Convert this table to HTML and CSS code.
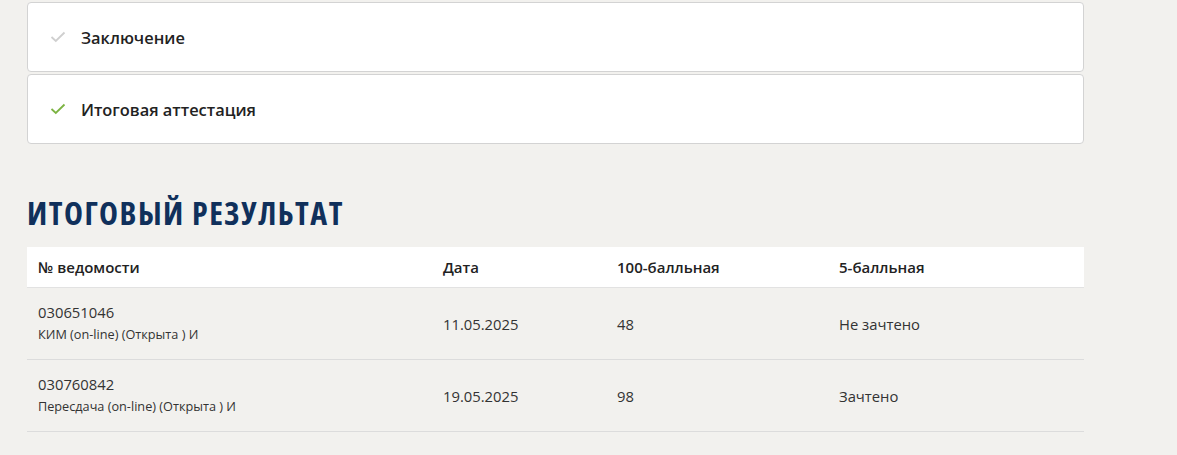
FILE: index.html
```html
<!DOCTYPE html>
<html lang="ru">
<head>
<meta charset="utf-8">
<link rel="stylesheet" href="styles.css">
</head>
<body>
<div class="page">
  <div class="steps">
    <div class="step">
      <svg class="check" width="16" height="12" viewBox="0 0 16 12"><path d="M1.5 6 L5.8 10 L14.5 1.5" fill="none" stroke="#cfcfcf" stroke-width="1.8"/></svg>
      <span class="step-title">Заключение</span>
    </div>
    <div class="step">
      <svg class="check" width="16" height="12" viewBox="0 0 16 12"><path d="M1.5 6 L5.8 10 L14.5 1.5" fill="none" stroke="#7cb342" stroke-width="1.8"/></svg>
      <span class="step-title">Итоговая аттестация</span>
    </div>
  </div>

  <h2 class="section-title">ИТОГОВЫЙ РЕЗУЛЬТАТ</h2>

  <table class="results">
    <thead>
      <tr>
        <th class="c1">№ ведомости</th>
        <th class="c2">Дата</th>
        <th class="c3">100-балльная</th>
        <th class="c4">5-балльная</th>
      </tr>
    </thead>
    <tbody>
      <tr>
        <td><div class="num">030651046</div><div class="sub">КИМ (on-line) (Открыта ) И</div></td>
        <td>11.05.2025</td>
        <td>48</td>
        <td>Не зачтено</td>
      </tr>
      <tr>
        <td><div class="num">030760842</div><div class="sub">Пересдача (on-line) (Открыта ) И</div></td>
        <td>19.05.2025</td>
        <td>98</td>
        <td>Зачтено</td>
      </tr>
    </tbody>
  </table>
</div>
</body>
</html>
```
FILE: styles.css
```css
html, body {
  margin: 0;
  padding: 0;
  background: #f2f1ee;
}
body {
  font-family: "Open Sans", "Noto Sans", sans-serif;
  color: #222;
}
.page {
  width: 1057px;
  margin-left: 27px;
  padding-top: 2px;
}
.steps {
  display: flex;
  flex-direction: column;
  gap: 2px;
}
.step {
  background: #fff;
  border: 1px solid #d3d3d3;
  border-radius: 4px;
  height: 70px;
  display: flex;
  align-items: center;
  padding-left: 22px;
  box-sizing: border-box;
}
.check {
  margin-right: 15px;
  flex: none;
}
.step-title {
  font-size: 16.4px;
  font-weight: 600;
  color: #222;
}
.section-title {
  margin: 50px 0 0 0;
  height: 46px;
  font-family: "Open Sans", sans-serif;
  font-weight: 700;
  font-stretch: 75%;
  font-size: 32px;
  line-height: 37px;
  color: #10305b;
  letter-spacing: 1.5px;
}
.results {
  width: 100%;
  border-collapse: collapse;
  margin-top: 7px;
}
.results th {
  background: #fff;
  text-align: left;
  font-size: 15px;
  font-weight: 600;
  height: 40px;
  padding: 0 11px;
  border-bottom: 1px solid #e2e2e2;
  color: #222;
}
.results th.c1 { width: 383px; }
.results th.c2 { width: 152px; }
.results th.c3 { width: 200px; }
.results td {
  font-size: 14.8px;
  padding: 0 11px;
  height: 71px;
  border-bottom: 1px solid #dcdcdc;
  vertical-align: middle;
  color: #333;
}
.num {
  font-size: 14.8px;
  line-height: 20px;
}
.sub {
  font-size: 12.7px;
  line-height: 24px;
}
```
